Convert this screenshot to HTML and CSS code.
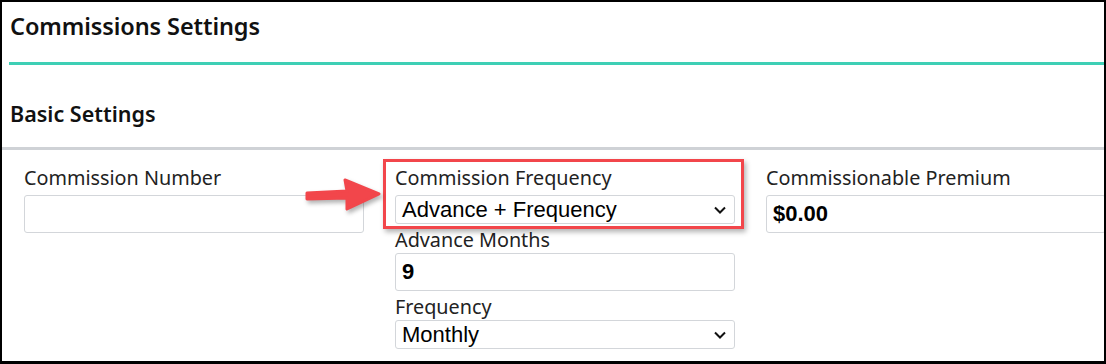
FILE: index.html
```html
<!DOCTYPE html>
<html lang="en">
<head>
    <meta charset="UTF-8">
    <title>Commissions Settings</title>
    <link rel="stylesheet" href="styles.css">
</head>
<body>
    <div class="page">
        <div class="page-header">
            <h1 class="page-title">Commissions Settings</h1>
        </div>
        <div class="section-header">
            <h2 class="section-title">Basic Settings</h2>
        </div>
        <div class="form-grid">
            <div class="field">
                <label class="field-label">Commission Number</label>
                <input class="text-input tall" type="text" value="">
            </div>
            <div class="field-stack">
                <div class="field highlighted">
                    <label class="field-label">Commission Frequency</label>
                    <div class="select-box">
                        <span>Advance + Frequency</span>
                        <svg class="chevron" viewBox="0 0 12 8" width="12" height="8"><path d="M1 1.5 L6 6.5 L11 1.5" fill="none" stroke="#111" stroke-width="2"/></svg>
                    </div>
                    <div class="callout-box"></div>
                    <svg class="callout-arrow" viewBox="0 0 80 40" width="80" height="40">
                        <path d="M4 19 L44 17 L42 6 L76 20 L44 35 L44 24 L4 25 Z" fill="#f2464b" stroke="#f2464b" stroke-width="3" stroke-linejoin="round"/>
                    </svg>
                </div>
                <div class="field">
                    <label class="field-label">Advance Months</label>
                    <input class="text-input bold" type="text" value="9">
                </div>
                <div class="field">
                    <label class="field-label">Frequency</label>
                    <div class="select-box">
                        <span>Monthly</span>
                        <svg class="chevron" viewBox="0 0 12 8" width="12" height="8"><path d="M1 1.5 L6 6.5 L11 1.5" fill="none" stroke="#111" stroke-width="2"/></svg>
                    </div>
                </div>
            </div>
            <div class="field">
                <label class="field-label">Commissionable Premium</label>
                <input class="text-input bold tall" type="text" value="$0.00">
            </div>
        </div>
    </div>
</body>
</html>
```

FILE: styles.css
```css
body {
    margin: 0;
    background: #000;
    font-family: "Noto Sans", sans-serif;
}
.page {
    width: 1106px;
    height: 364px;
    box-sizing: border-box;
    border: 2px solid #000;
    border-bottom-width: 3px;
    background: #fff;
    overflow: hidden;
}
.page-header {
    margin-left: 7px;
    height: 60px;
    border-bottom: 3px solid #3ecfb5;
}
.page-title {
    margin: 0;
    padding: 8px 0 0 1px;
    font-size: 23.5px;
    font-weight: 600;
    color: #111;
    letter-spacing: -0.1px;
}
.section-header {
    height: 82px;
    border-bottom: 3px solid #cfd2d6;
}
.section-title {
    margin: 0;
    padding: 34px 0 0 8px;
    font-size: 21.5px;
    font-weight: 600;
    line-height: 30px;
    color: #111;
}
.form-grid {
    display: grid;
    grid-template-columns: 340px 340px 340px;
    column-gap: 31px;
    padding: 14px 0 0 22px;
}
.field {
    display: flex;
    flex-direction: column;
}
.field-stack {
    display: flex;
    flex-direction: column;
}
.field-label {
    font-size: 19.8px;
    color: #222;
    line-height: 28px;
    height: 31px;
}
.field-stack .field + .field .field-label {
    height: 29px;
    line-height: 32px;
}
.text-input {
    box-sizing: border-box;
    height: 38px;
    border: 1px solid #d3d6da;
    border-radius: 3px;
    padding: 0 4px;
    font-family: "Liberation Sans", Arial, sans-serif;
    font-size: 22px;
    color: #000;
    outline: none;
}
.text-input.bold {
    font-weight: bold;
    padding-left: 6px;
}
.select-box {
    box-sizing: border-box;
    height: 29px;
    border: 1px solid #d3d6da;
    border-radius: 3px;
    padding: 0 8px 0 6px;
    display: flex;
    align-items: center;
    justify-content: space-between;
    font-family: "Liberation Sans", Arial, sans-serif;
    font-size: 22px;
    color: #000;
}
.highlighted {
    position: relative;
}
.callout-box {
    position: absolute;
    left: -12px;
    top: -5px;
    right: -9px;
    bottom: -5px;
    border: 3px solid #f2464b;
    box-shadow: 2px 3px 5px rgba(0, 0, 0, 0.3);
    pointer-events: none;
}
.callout-arrow {
    position: absolute;
    left: -92px;
    top: 10px;
    filter: drop-shadow(2px 3px 2px rgba(0, 0, 0, 0.3));
}
```
